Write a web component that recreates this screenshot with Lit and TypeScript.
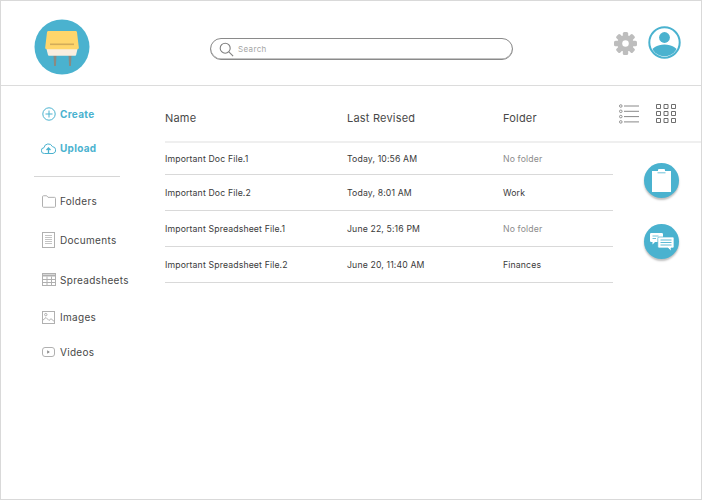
import { LitElement, html, css, svg } from "lit";
import { customElement } from "lit/decorators.js";

interface FileRow {
  name: string;
  revised: string;
  folder: string;
}

const FILES: FileRow[] = [
  { name: "Important Doc File.1", revised: "Today, 10:56 AM", folder: "No folder" },
  { name: "Important Doc File.2", revised: "Today, 8:01 AM", folder: "Work" },
  { name: "Important Spreadsheet File.1", revised: "June 22, 5:16 PM", folder: "No folder" },
  { name: "Important Spreadsheet File.2", revised: "June 20, 11:40 AM", folder: "Finances" },
];

const icon = (size: number, w: number, h: number, body: unknown) => html`<svg
  width=${size}
  height=${Math.round((size * h) / w)}
  viewBox="0 0 ${w} ${h}"
  fill="none"
>
  ${body}
</svg>`;

const ICONS = {
  create: svg`<circle cx="7" cy="7" r="6.2" stroke="#4ab2cf"/><path d="M7 3.500v7M3.500 7h7" stroke="#4ab2cf"/>`,
  upload: svg`<path d="M3.500 11.500A2.900 2.900 0 0 1 3 5.700 4.400 4.400 0 0 1 11.400 4.600 3.500 3.500 0 0 1 12 11.500Z" stroke="#4ab2cf"/><path d="M7.500 11V6M5.500 8l2-2 2 2" stroke="#4ab2cf" stroke-width="1.300"/>`,
  folder: svg`<path d="M.5 11V1.500a1 1 0 0 1 1-1h3.200l1.300 1.600h6.500a1 1 0 0 1 1 1V11a1 1 0 0 1-1 1h-11a1 1 0 0 1-1-1Z" stroke="#b0b0b0"/>`,
  doc: svg`<rect x=".5" y=".5" width="12" height="15" stroke="#b0b0b0"/><path d="M3 3.500h7M3 5.500h7M3 7.500h7M3 9.500h7M3 11.500h7" stroke="#c4c4c4"/>`,
  sheet: svg`<rect x=".5" y=".5" width="13" height="12" stroke="#b0b0b0"/><path d="M.5 2.500h13" stroke="#b0b0b0" stroke-width="2"/><path d="M.5 6.500h13M.5 9.500h13M5 3.500v9M9.500 3.500v9" stroke="#b0b0b0"/>`,
  image: svg`<rect x=".5" y=".5" width="12" height="12" stroke="#b0b0b0"/><circle cx="3.800" cy="3.600" r="1.200" stroke="#b0b0b0"/><path d="M.5 9.500l3.500-3 3 3 2-1.800 3.500 3" stroke="#b0b0b0"/>`,
  video: svg`<rect x=".5" y=".5" width="12" height="9" rx="2.500" stroke="#b0b0b0"/><path d="M5.200 3.300l2.600 1.700-2.600 1.700Z" fill="#888"/>`,
};

const NAV = [
  { label: "Folders", icon: icon(14, 14, 12.5, ICONS.folder) },
  { label: "Documents", icon: icon(13, 13, 16, ICONS.doc) },
  { label: "Spreadsheets", icon: icon(14, 14, 13, ICONS.sheet) },
  { label: "Images", icon: icon(13, 13, 13, ICONS.image) },
  { label: "Videos", icon: icon(13, 13, 10, ICONS.video) },
];

@customElement("app-root")
export class AppRoot extends LitElement {
  static styles = css`
    :host {
      display: block;
      box-sizing: border-box;
      width: 702px;
      height: 500px;
      border: 1px solid #d9d9d9;
      background: #fff;
      color: #3c3c3c;
      font-family: "Inter", "DejaVu Sans", sans-serif;
      overflow: hidden;
    }

    header {
      display: flex;
      align-items: flex-start;
      height: 84px;
      border-bottom: 1px solid #dcdcdc;
    }

    .logo {
      display: block;
      margin: 18px 0 0 33px;
    }

    .search {
      display: flex;
      align-items: center;
      gap: 4px;
      box-sizing: border-box;
      width: 303px;
      height: 22px;
      margin: 37px 0 0 120px;
      padding-left: 8px;
      border: 1px solid #8a8a8a;
      border-radius: 11px;
      box-shadow: inset 0 -0.5px 0 #8a8a8a;
      font-size: 8px;
      letter-spacing: 0.35px;
      color: #a5a5a5;
    }

    .search svg {
      display: block;
    }

    .gear {
      display: block;
      margin: 31px 0 0 101px;
    }

    .user {
      display: block;
      margin: 25px 0 0 11px;
    }

    .body {
      display: flex;
    }

    nav {
      flex: none;
      display: grid;
      grid-template-rows: 34px 34px 17px 38px 40px 39px 36px 33px;
      width: 164px;
      padding-top: 11px;
    }

    .item {
      display: flex;
      align-items: center;
      margin-left: 40px;
      font-size: 10px;
      letter-spacing: 0.3px;
      color: #484848;
    }

    .item .glyph {
      flex: none;
      display: flex;
      justify-content: center;
      width: 15px;
      margin-right: 4px;
    }

    .item svg {
      display: block;
    }

    .action {
      font-weight: 700;
      color: #4ab2cf;
    }

    .divider {
      align-self: start;
      width: 86px;
      height: 1px;
      margin: 11px 0 0 33px;
      background: #d6d6d6;
    }

    main {
      flex: 1;
      min-width: 0;
    }

    .head {
      display: flex;
      align-items: flex-start;
      height: 55px;
      border-bottom: 2px solid #efefef;
    }

    .cols {
      display: grid;
      grid-template-columns: 182px 156px 110px;
      width: 448px;
    }

    .head .cols {
      padding-top: 25px;
      font-size: 11px;
      letter-spacing: 0.2px;
      color: #484848;
    }

    .views {
      display: flex;
      gap: 17px;
      margin: 18px 0 0 6px;
    }

    .views svg {
      display: block;
    }

    .content {
      display: flex;
    }

    .rows .cols {
      align-items: center;
      box-sizing: border-box;
      height: 36px;
      border-bottom: 1px solid #d9d9d9;
      font-size: 8.7px;
      letter-spacing: 0.14px;
      color: #3a3a3a;
    }

    .rows .cols:first-child {
      height: 32px;
    }

    .muted {
      color: #8c8c8c;
    }

    .fabs {
      display: flex;
      flex-direction: column;
      gap: 26px;
      margin: 20px 0 0 31px;
    }

    .fab {
      display: flex;
      align-items: center;
      justify-content: center;
      width: 35px;
      height: 35px;
      border-radius: 50%;
      background: #4ab2cf;
      box-shadow: 0 2px 2px rgba(0, 0, 0, 0.25);
    }

    .fab svg {
      display: block;
    }
  `;

  private renderRow(row: FileRow) {
    return html`<div class="cols">
      <span>${row.name}</span>
      <span>${row.revised}</span>
      <span class=${row.folder === "No folder" ? "muted" : ""}>${row.folder}</span>
    </div>`;
  }

  render() {
    return html`
      <header>
        <svg class="logo" width="56" height="56" viewBox="0 0 56 56">
          <circle cx="28" cy="28" r="27.5" fill="#4ab2cf" />
          <path d="M19.500 36h3l-.6 11h-1.800ZM34.500 36h3l-.6 11h-1.800Z" fill="#8d8a80" />
          <path d="M12.500 30h31l-1.400 6a1 1 0 0 1-1 .7H15a1 1 0 0 1-1-.7Z" fill="#f9eee0" />
          <path d="M14.500 12h27a1.500 1.500 0 0 1 1.500 1.200l1.800 15.300c.2 1.200-.4 1.700-2 1.700H13.200c-1.600 0-2.200-.5-2-1.700L13 13.200a1.500 1.500 0 0 1 1.500-1.200Z" fill="#ffd66b" />
          <rect x="16" y="24.500" width="24" height="1.600" fill="#d2ac5b" />
        </svg>
        <div class="search">
          <svg width="15" height="15" viewBox="0 0 15 15" fill="none" stroke="#808080" stroke-width="1.100">
            <circle cx="6.200" cy="6.200" r="5" />
            <path d="M9.900 9.900l4.200 4.200" />
          </svg>
          <span>Search</span>
        </div>
        <svg class="gear" width="23" height="23" viewBox="0 0 24 24" fill="#bdbdbd">
          <rect x="9.200" y="0" width="5.600" height="24" rx="1.600" />
          <rect x="9.200" y="0" width="5.600" height="24" rx="1.600" transform="rotate(45 12 12)" />
          <rect x="9.200" y="0" width="5.600" height="24" rx="1.600" transform="rotate(90 12 12)" />
          <rect x="9.200" y="0" width="5.600" height="24" rx="1.600" transform="rotate(135 12 12)" />
          <circle cx="12" cy="12" r="8.500" />
          <circle cx="12" cy="12" r="3.400" fill="#fff" />
        </svg>
        <svg class="user" width="33" height="33" viewBox="0 0 33 33">
          <defs>
            <clipPath id="user-clip"><circle cx="16.500" cy="16.500" r="13.800" /></clipPath>
          </defs>
          <circle cx="16.500" cy="16.500" r="15.200" fill="#fff" stroke="#4ab2cf" stroke-width="2" />
          <circle cx="16.500" cy="11.500" r="5.400" fill="#4ab2cf" />
          <path d="M3 33V28C3 22 9 18.500 16.500 18.500S30 22 30 28V33Z" fill="#4ab2cf" clip-path="url(#user-clip)" />
        </svg>
      </header>
      <div class="body">
        <nav>
          <div class="item action">
            <span class="glyph">${icon(14, 14, 14, ICONS.create)}</span>Create
          </div>
          <div class="item action">
            <span class="glyph">${icon(15, 15, 13, ICONS.upload)}</span>Upload
          </div>
          <div class="divider"></div>
          ${NAV.map(
            (n) => html`<div class="item">
              <span class="glyph">${n.icon}</span>${n.label}
            </div>`,
          )}
        </nav>
        <main>
          <div class="head">
            <div class="cols">
              <span>Name</span>
              <span>Last Revised</span>
              <span>Folder</span>
            </div>
            <div class="views">
              <svg width="20" height="20" viewBox="0 0 20 20" fill="none" stroke="#7a7a7a">
                <circle cx="1.800" cy="2" r="1.300" stroke-width=".8" />
                <circle cx="1.800" cy="7.300" r="1.300" stroke-width=".8" />
                <circle cx="1.800" cy="12.600" r="1.300" stroke-width=".8" />
                <circle cx="1.800" cy="17.900" r="1.300" stroke-width=".8" />
                <path d="M5 2h15M5 7.300h15M5 12.600h15M5 17.900h15" stroke-width=".9" />
              </svg>
              <svg width="20" height="19" viewBox="0 0 20 19" fill="none" stroke="#6e6e6e">
                <path d="M.5.500h4v4h-4ZM8 .500h4v4H8ZM15.500.500h4v4h-4ZM.5 7.500h4v4h-4ZM8 7.500h4v4H8ZM15.500 7.500h4v4h-4ZM.5 14.500h4v4h-4ZM8 14.500h4v4H8ZM15.500 14.500h4v4h-4Z" />
              </svg>
            </div>
          </div>
          <div class="content">
            <div class="rows">${FILES.map((row) => this.renderRow(row))}</div>
            <div class="fabs">
              <div class="fab">
                <svg width="19" height="23" viewBox="0 0 19 23">
                  <path d="M0 2h6V1a1 1 0 0 1 1-1h5a1 1 0 0 1 1 1v1h6v21H0Z" fill="#fff" />
                  <path d="M5.500 3.800h8" stroke="#4ab2cf" stroke-width=".8" />
                </svg>
              </div>
              <div class="fab">
                <svg width="24" height="18" viewBox="0 0 24 18">
                  <path d="M1.200 0h10.600a1.200 1.200 0 0 1 1.200 1.200v6.600A1.200 1.200 0 0 1 11.800 9H5l-2.500 2.500V9H1.200A1.200 1.200 0 0 1 0 7.800V1.200A1.200 1.200 0 0 1 1.200 0Z" fill="#fff" />
                  <path d="M2.500 3h6M2.500 5.500h3.500" stroke="#4ab2cf" stroke-width=".8" />
                  <path d="M9 4h13.800A1.200 1.200 0 0 1 24 5.200v8.600a1.200 1.200 0 0 1-1.200 1.200H21v3l-3-3H9a1.200 1.200 0 0 1-1.200-1.200V5.200A1.200 1.200 0 0 1 9 4Z" fill="#fff" stroke="#4ab2cf" stroke-width=".7" />
                  <path d="M10.500 7h11M10.500 9.500h11M10.500 12h11" stroke="#4ab2cf" stroke-width=".9" />
                </svg>
              </div>
            </div>
          </div>
        </main>
      </div>
    `;
  }
}
